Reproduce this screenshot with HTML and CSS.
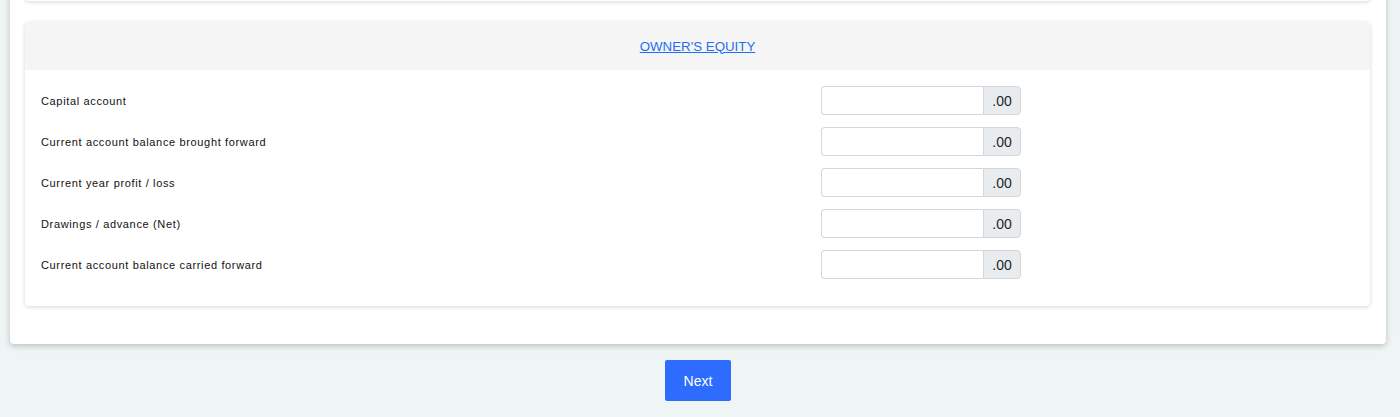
FILE: index.html
```html
<!DOCTYPE html>
<html lang="en">
<head>
    <meta charset="UTF-8">
    <meta name="viewport" content="width=device-width, initial-scale=1.0">
    <title>Owner's Equity</title>
    <link rel="stylesheet" href="styles.css">
</head>
<body>
    <div class="page">
        <div class="outer-card">
            <div class="section-card section-prev"></div>

            <div class="section-card">
                <div class="section-header">
                    <a href="#" class="section-title">OWNER'S EQUITY</a>
                </div>
                <div class="section-body">
                    <div class="form-row">
                        <label>Capital account</label>
                        <div class="input-group">
                            <input type="text">
                            <span class="addon">.00</span>
                        </div>
                    </div>
                    <div class="form-row">
                        <label>Current account balance brought forward</label>
                        <div class="input-group">
                            <input type="text">
                            <span class="addon">.00</span>
                        </div>
                    </div>
                    <div class="form-row">
                        <label>Current year profit / loss</label>
                        <div class="input-group">
                            <input type="text">
                            <span class="addon">.00</span>
                        </div>
                    </div>
                    <div class="form-row">
                        <label>Drawings / advance (Net)</label>
                        <div class="input-group">
                            <input type="text">
                            <span class="addon">.00</span>
                        </div>
                    </div>
                    <div class="form-row">
                        <label>Current account balance carried forward</label>
                        <div class="input-group">
                            <input type="text">
                            <span class="addon">.00</span>
                        </div>
                    </div>
                </div>
            </div>
        </div>

        <div class="actions">
            <button class="btn-next">Next</button>
        </div>
    </div>
</body>
</html>
```

FILE: styles.css
```css
* {
    margin: 0;
    padding: 0;
    box-sizing: border-box;
}

body {
    font-family: 'Liberation Sans', Arial, sans-serif;
    background: #eef5f4;
    color: #111;
}

.page {
    padding: 0 14px 16px 10px;
    margin-top: -39px;
}

.outer-card {
    background: #fff;
    border-radius: 4px;
    box-shadow: 0 2px 6px rgba(0, 0, 0, 0.22);
    padding: 0 16px 38px 15px;
}

.section-card {
    background: #fff;
    border-radius: 4px;
    box-shadow: 0 1px 4px rgba(0, 0, 0, 0.16);
    margin-top: 21px;
    overflow: hidden;
}

.section-prev {
    height: 40px;
    margin-top: 0;
    border-radius: 0 0 4px 4px;
}

.section-header {
    background: #f5f5f5;
    height: 48px;
    display: flex;
    align-items: center;
    justify-content: center;
}

.section-title {
    color: #1f6ff0;
    font-size: 13.3px;
    text-decoration: underline;
}

.section-body {
    padding: 16px 16px 15px;
}

.form-row {
    display: grid;
    grid-template-columns: 780px 200px;
    align-items: center;
    margin-bottom: 12px;
}

.form-row label {
    font-size: 11px;
    letter-spacing: 0.65px;
    color: #111;
}

.input-group {
    display: flex;
    height: 29px;
}

.input-group input {
    flex: 1;
    min-width: 0;
    border: 1px solid #d4d6d9;
    border-right: none;
    border-radius: 4px 0 0 4px;
    background: #fff;
}

.addon {
    width: 38px;
    display: flex;
    align-items: center;
    justify-content: center;
    background: #e9ecef;
    border: 1px solid #d4d6d9;
    border-radius: 0 4px 4px 0;
    font-size: 14px;
    color: #212529;
}

.actions {
    display: flex;
    justify-content: center;
    padding-top: 16px;
}

.btn-next {
    width: 66px;
    height: 41px;
    background: #2d6cff;
    border: none;
    border-radius: 2px;
    color: #fff;
    font-family: inherit;
    font-size: 14px;
}
```
